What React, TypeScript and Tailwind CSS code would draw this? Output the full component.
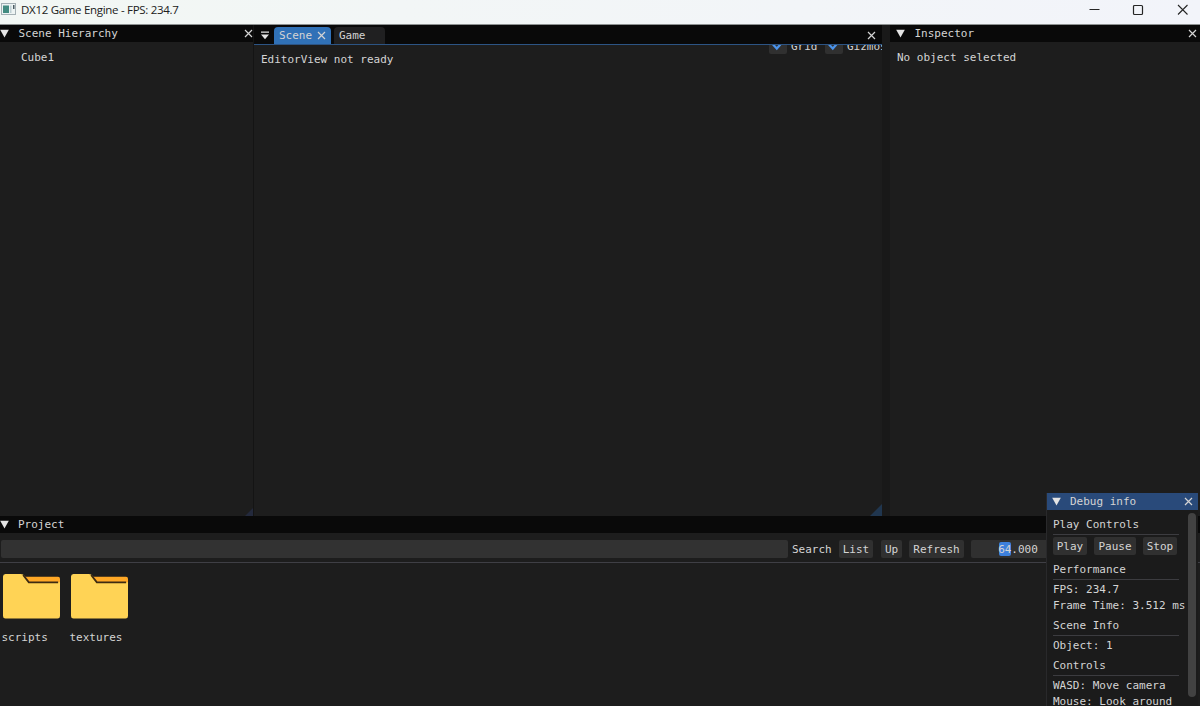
import type { ReactNode } from 'react'

type IconProps = { className?: string }

function Arrow({ className = '' }: IconProps) {
  return (
    <svg viewBox="0 0 9 9" className={`h-[9px] w-[9px] shrink-0 ${className}`}>
      <path d="M0.2 0.7h8.6L4.5 8.4z" fill="#e4e4e4" />
    </svg>
  )
}

function Cross({ className = '' }: IconProps) {
  return (
    <svg viewBox="0 0 9 9" className={`h-[9px] w-[9px] shrink-0 ${className}`}>
      <path d="M1 1l7 7M8 1L1 8" stroke="currentColor" strokeWidth="1.2" fill="none" />
    </svg>
  )
}

function Grip({ className = '' }: IconProps) {
  return (
    <svg viewBox="0 0 12 12" className={`absolute right-0 bottom-0 ${className}`}>
      <path d="M12 0v12H0z" fill="currentColor" />
    </svg>
  )
}

function Button({ children, className = '' }: { children: ReactNode; className?: string }) {
  return (
    <button className={`flex shrink-0 items-center justify-center rounded-[2px] bg-[#303030] pt-[2px] ${className}`}>
      {children}
    </button>
  )
}

function Checkbox({ label, className = '' }: { label: string; className?: string }) {
  return (
    <div className={`flex shrink-0 ${className}`}>
      <div className="flex h-[18px] w-[18px] shrink-0 items-center justify-center rounded-[2px] bg-[#303030]">
        <svg viewBox="0 0 12 12" className="h-3 w-3">
          <path d="M1 5.5l3.8 4L11 2.5" fill="none" stroke="#4b93ea" strokeWidth="2.2" />
        </svg>
      </div>
      <span className="ml-[4px] leading-[21px]">{label}</span>
    </div>
  )
}

function Folder({ name }: { name: string }) {
  return (
    <div className="flex w-[68px] flex-col">
      <svg viewBox="0 0 58 45" className="ml-[3px] h-[45px] w-[57px]" preserveAspectRatio="none">
        <path d="M22 2.8h34a2 2 0 0 1 2 2V12H24z" fill="#ffa826" />
        <path d="M2.5 0H18c2 0 3 .7 4.2 2.2l4.3 6.1H58V42a2.5 2.5 0 0 1-2.5 2.5h-53A2.5 2.5 0 0 1 0 42V2.5A2.5 2.5 0 0 1 2.5 0z" fill="#ffd355" />
        <path d="M20.5 1l5.8 7.4h29.8" fill="none" stroke="#3d2a12" strokeWidth="1.9" />
      </svg>
      <span className="mt-[11px] ml-[1.5px] leading-4">{name}</span>
    </div>
  )
}

function Section({ title, children }: { title: string; children: ReactNode }) {
  return (
    <div className="mb-1">
      <h2 className="h-[18px] w-[126px] border-b border-[#3c3c40] leading-4">{title}</h2>
      <div className="pt-[2px] leading-4">{children}</div>
    </div>
  )
}

function TitleBar() {
  return (
    <header className="flex h-[25px] shrink-0 items-start border-b border-[#8d9191] bg-linear-to-r from-[#f2f7f4] to-[#f2f4fa] text-[#202020]">
      <svg viewBox="0 0 15 12" className="mt-[3px] ml-[1px] h-3 w-[15px]">
        <rect x="0.5" y="0.5" width="14" height="11" fill="#edf4f3" stroke="#a3b0b4" />
        <rect x="2" y="2.5" width="6" height="7.5" fill="#428c80" />
        <rect x="9" y="2.5" width="1.5" height="7.5" fill="#bfd0d4" />
        <rect x="12" y="2" width="1.5" height="4" fill="#4b5c63" />
      </svg>
      <h1 className="ml-[5px] font-['Open_Sans',sans-serif] text-[11.5px] leading-[19px] tracking-[-0.3px] whitespace-nowrap">
        DX12 Game Engine - FPS: 234.7
      </h1>
      <svg viewBox="0 0 100 12" className="mt-1 mr-[11px] ml-auto h-3 w-[100px]" fill="none" stroke="#252525">
        <path d="M0.5 5.5h10" />
        <rect x="44.5" y="1.5" width="9" height="9" rx="1" strokeWidth="1.2" />
        <path d="M89 1l9.5 9.5M98.5 1L89 10.5" strokeWidth="1.1" />
      </svg>
    </header>
  )
}

function Hierarchy() {
  return (
    <section className="relative flex w-[254px] shrink-0 flex-col border-r border-[#141414] bg-[#1d1d1d]">
      <div className="flex h-[17px] items-center bg-[#090909]">
        <Arrow />
        <span className="ml-[9.5px] pt-[2px]">Scene Hierarchy</span>
        <Cross className="ml-auto" />
      </div>
      <span className="mt-[7px] ml-[21px] leading-[17px]">Cube1</span>
      <Grip className="h-[8px] w-[8px] text-[#23293c]" />
    </section>
  )
}

function SceneView() {
  return (
    <section className="relative flex w-[628px] shrink-0 flex-col bg-[#1d1d1d]">
      <div className="flex h-5 items-end border-b border-[#2c5484] bg-[#090909]">
        <svg viewBox="0 0 8 9" className="mb-[4px] ml-[7px] h-[9px] w-2" fill="#e4e4e4">
          <path d="M0 0.5h8v1.3H0zM0 3.5h8L4 8.3z" />
        </svg>
        <div className="ml-[5px] flex h-[17px] w-[57px] items-center rounded-t-[4px] bg-[#3071b7] pl-[5px]">
          <span className="pt-[2px]">Scene</span>
          <Cross className="ml-[5px]" />
        </div>
        <div className="ml-[3px] flex h-[17px] w-[51px] items-center rounded-t-[4px] bg-[#202021] pt-[2px] pl-[5px]">Game</div>
        <Cross className="mr-[6px] mb-[4px] ml-auto" />
      </div>
      <span className="mt-[6px] ml-[7px] leading-[17px]">EditorView not ready</span>
      {/* toolbar scrolled partly under the tab bar */}
      <div className="absolute top-5 right-0 flex h-[9px] w-[113px] items-end overflow-hidden">
        <Checkbox label="Grid" className="h-[18px] w-14" />
        <Checkbox label="Gizmos" className="h-[18px]" />
      </div>
      <Grip className="h-[12px] w-[12px] text-[#20364f]" />
    </section>
  )
}

function Inspector() {
  return (
    <section className="flex flex-1 flex-col bg-[#1d1d1d]">
      <div className="flex h-[17px] items-center bg-[#090909] pl-[6px]">
        <Arrow />
        <span className="ml-[9.5px] pt-[2px]">Inspector</span>
        <Cross className="mr-[3px] ml-auto" />
      </div>
      <span className="mt-[7px] ml-[7px] leading-[17px]">No object selected</span>
    </section>
  )
}

function Project() {
  return (
    <section className="flex flex-1 flex-col bg-[#1d1d1d]">
      <div className="flex h-[17px] shrink-0 items-center bg-[#090909]">
        <Arrow />
        <span className="ml-[9px] pt-[2px]">Project</span>
      </div>
      <div className="mt-[7px] flex h-[23px] shrink-0 items-start border-b border-[#3f3f45]">
        <div className="ml-[1px] h-[18px] w-[787px] shrink-0 rounded-[2px] bg-[#323232]" />
        <span className="ml-[4px] w-[47px] shrink-0 leading-5">Search</span>
        <Button className="h-[18px] w-[34px]">List</Button>
        <Button className="ml-[8px] h-[18px] w-[21px]">Up</Button>
        <Button className="ml-[7px] h-[18px] w-[55px]">Refresh</Button>
        <div className="relative ml-[7px] h-[18px] w-[94px] shrink-0 rounded-[2px] bg-[#303030] text-center leading-5">
          <div className="absolute top-[2px] left-[28px] h-[14px] w-[12px] rounded-[2px] bg-[#3d80dc]" />
          <span className="relative">64.000</span>
        </div>
      </div>
      <div className="mt-[11px] flex">
        <Folder name="scripts" />
        <Folder name="textures" />
      </div>
    </section>
  )
}

function DebugInfo() {
  return (
    <aside className="absolute top-[493px] left-[1046px] flex h-[213px] w-[152px] flex-col overflow-hidden border-l border-[#29292b] bg-[#1b1b1b]">
      <div className="flex h-[17px] shrink-0 items-center bg-[#294a7a] pr-[5px] pl-[5px]">
        <Arrow />
        <span className="ml-[9px] pt-[2px]">Debug info</span>
        <Cross className="ml-auto" />
      </div>
      <div className="flex min-h-0 flex-1">
        <div className="w-[141px] shrink-0 pt-[7px] pl-[6px] whitespace-nowrap">
          <Section title="Play Controls">
            <div className="mb-[7px] flex gap-[7px]">
              <Button className="h-[18px] w-[34px]">Play</Button>
              <Button className="h-[18px] w-[42px]">Pause</Button>
              <Button className="h-[18px] w-[34px]">Stop</Button>
            </div>
          </Section>
          <Section title="Performance">
            <p>FPS: 234.7</p>
            <p>Frame Time: 3.512 ms</p>
          </Section>
          <Section title="Scene Info">
            <p>Object: 1</p>
          </Section>
          <Section title="Controls">
            <p>WASD: Move camera</p>
            <p>Mouse: Look around</p>
          </Section>
        </div>
        <div className="mt-[3px] h-[184px] w-[8px] rounded-full bg-[#424242]" />
      </div>
    </aside>
  )
}

export default function App() {
  return (
    <div className="relative flex h-[706px] w-[1200px] flex-col overflow-hidden bg-[#191919] font-['DejaVu_Sans_Mono',monospace] text-[11px] text-[#d4d4d4]">
      <TitleBar />
      <main className="flex h-[491px] shrink-0 bg-[#161616]">
        <Hierarchy />
        <SceneView />
        <div className="w-[8px] bg-[#191919]" />
        <Inspector />
      </main>
      <Project />
      <DebugInfo />
    </div>
  )
}
